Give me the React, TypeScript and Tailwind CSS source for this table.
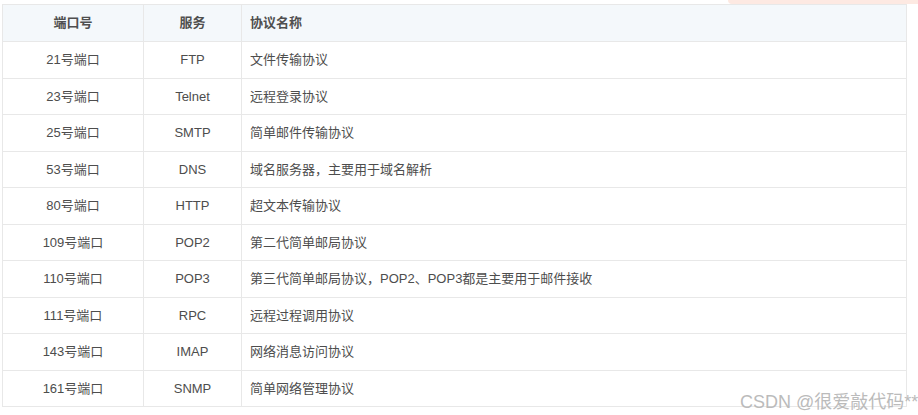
import React from "react";

const rows: [string, string, string][] = [
  ["21号端口", "FTP", "文件传输协议"],
  ["23号端口", "Telnet", "远程登录协议"],
  ["25号端口", "SMTP", "简单邮件传输协议"],
  ["53号端口", "DNS", "域名服务器，主要用于域名解析"],
  ["80号端口", "HTTP", "超文本传输协议"],
  ["109号端口", "POP2", "第二代简单邮局协议"],
  ["110号端口", "POP3", "第三代简单邮局协议，POP2、POP3都是主要用于邮件接收"],
  ["111号端口", "RPC", "远程过程调用协议"],
  ["143号端口", "IMAP", "网络消息访问协议"],
  ["161号端口", "SNMP", "简单网络管理协议"],
];

export default function App() {
  return (
    <div
      className="relative h-[415px] w-[918px] overflow-hidden bg-white text-[13px] text-[#4d4d4d]"
      style={{ fontFamily: '"Liberation Sans", "Noto Sans CJK SC", sans-serif' }}
    >
      {/* faded pink banner peeking at the top */}
      <div className="absolute right-0 top-0 h-[4px] w-[190px] rounded-bl-[20px] bg-[#fde9e2]" />

      <div className="pl-[2px] pt-[4px]">
        <table className="w-[905px] table-fixed border-collapse">
          <colgroup>
            <col className="w-[141px]" />
            <col className="w-[98px]" />
            <col />
          </colgroup>
          <thead>
            <tr className="h-[37px] bg-[#f4f8fb] font-bold text-[#4f4f4f]">
              <th className="border border-[#e8e8e8] text-center">端口号</th>
              <th className="border border-[#e8e8e8] text-center">服务</th>
              <th className="border border-[#e8e8e8] pl-[8px] text-left">协议名称</th>
            </tr>
          </thead>
          <tbody>
            {rows.map(([port, service, desc]) => (
              <tr key={port} className="h-[36.5px]">
                <td className="border border-[#e8e8e8] text-center">{port}</td>
                <td className="border border-[#e8e8e8] text-center">{service}</td>
                <td className="border border-[#e8e8e8] pl-[8px]">{desc}</td>
              </tr>
            ))}
          </tbody>
        </table>
      </div>

      <div className="absolute bottom-[4px] left-[740px] whitespace-nowrap text-[18px] leading-none text-[#bbbbbb]">
        CSDN @很爱敲代码**
      </div>
    </div>
  );
}
